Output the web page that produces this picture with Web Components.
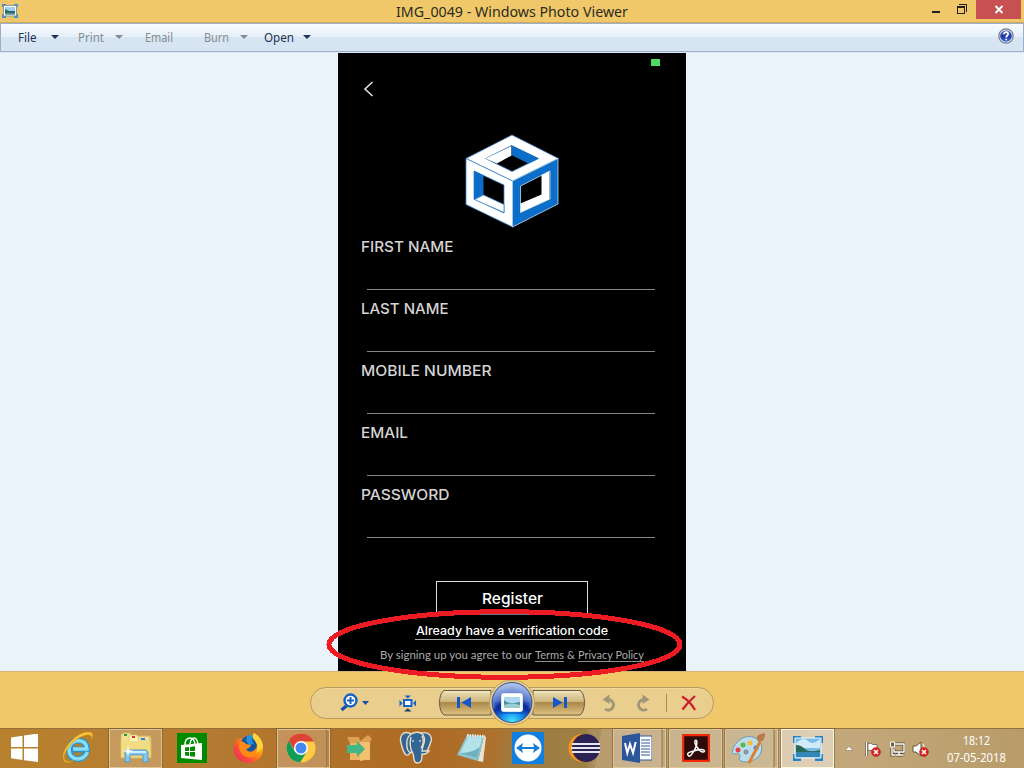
<!DOCTYPE html>
<html lang="en">
<head>
<meta charset="utf-8">
<title>Windows Photo Viewer</title>
<style>
html,body{margin:0;width:1024px;height:768px;overflow:hidden;background:#eaf2fb}
</style>
</head>
<body>
<photo-desktop></photo-desktop>
<script>
function define(name, html, extra) {
  const template = document.createElement('template');
  template.innerHTML = html;
  customElements.define(name, class extends HTMLElement {
    constructor() {
      super();
      this.attachShadow({mode: 'open'}).append(template.content.cloneNode(true));
    }
    connectedCallback() { if (extra) extra(this, this.shadowRoot); }
  });
}

// Widens or condenses its text so that it fills the width given in the "w" attribute.
define('fit-text', `<style>
:host{display:block;white-space:nowrap;flex:none}
span{display:inline-block;transform-origin:0 50%}
</style><span><slot></slot></span>`, (host, root) => {
  const w = +host.getAttribute('w');
  const span = root.querySelector('span');
  host.style.width = w + 'px';
  span.style.transform = 'scaleX(' + w / span.getBoundingClientRect().width + ')';
});

define('title-bar', `<style>
:host{display:flex;height:22px;background:#f0c869;border-bottom:1px solid #cfaa62;position:relative;font:15px/22px "Noto Sans",sans-serif;color:#2e2b23}
.app{margin:3px 0 0 2px;width:16px;height:15px;flex:none}
fit-text{margin-left:378px}
.btns{display:flex;margin-left:auto;margin-right:3px}
.btns svg{display:block}
</style>
<svg class="app" viewBox="0 0 16 15"><path d="M0 1h4v3H0zM12 1h4v3h-4zM0 11h4v4H0zM12 11h4v4h-4z" fill="#3a93d0"/><rect x="1.5" y="2.5" width="13" height="10.5" fill="#fff" stroke="#89979d"/><path d="M3 4h10v4H3z" fill="#9bd0ee"/><path d="M3 6l4 2 6 0v3.500H3z" fill="#286a65"/><path d="M3 10h10v1.500H3z" fill="#5b9b8c"/></svg>
<fit-text w="232">IMG_0049 - Windows Photo Viewer</fit-text>
<div class="btns">
<svg width="92" height="20" viewBox="929 0 92 20" shape-rendering="crispEdges"><path d="M932 11h8v2h-8z" fill="#222"/><path d="M957 6h8v8h-8zM958 8v5h6V8z" fill="#222" fill-rule="evenodd"/><path d="M959 4h8v1h-8zM966 4h1v8h-1z" fill="#222"/><path d="M976 0h45v19h-45z" fill="#c75050"/><path d="M995.500 6l7 7M1002.500 6l-7 7" stroke="#fff" stroke-width="1.900" shape-rendering="auto"/></svg>
</div>`);

define('menu-entry', `<style>
:host{display:flex;align-items:center;color:#1d3355;margin-left:var(--gap,0)}
:host([off]){color:#858a91}
svg{display:none;width:8px;height:4px;margin:-1px 0 0 var(--arrow);fill:currentColor}
:host([drop]) svg{display:block}
</style><slot></slot><svg viewBox="0 0 8 4"><path d="M0 0h8L4 4z"/></svg>`);

define('menu-bar', `<style>
:host{display:flex;align-items:center;box-sizing:border-box;height:29px;border:1px solid #9cafc8;background:linear-gradient(#f7fbff 0,#e5eff9 13px,#d7e5f2 13px,#d7e5f2);font:12.2px/26px "Noto Sans",sans-serif;padding-left:17px}
svg{margin-left:auto;margin-right:9px;margin-top:-3px}
fit-text{transform:translateY(-.5px)}
</style>
<menu-entry drop style="--arrow:14.500px"><fit-text w="18.500">File</fit-text></menu-entry>
<menu-entry drop off style="--gap:19px;--arrow:10.500px"><fit-text w="26">Print</fit-text></menu-entry>
<menu-entry off style="--gap:22.500px"><fit-text w="28">Email</fit-text></menu-entry>
<menu-entry drop off style="--gap:31px;--arrow:11px"><fit-text w="25">Burn</fit-text></menu-entry>
<menu-entry drop style="--gap:16px;--arrow:9px"><fit-text w="30">Open</fit-text></menu-entry>
<svg width="16" height="16" viewBox="0 0 16 16"><defs><linearGradient id="g" x2="0" y2="1"><stop stop-color="#6381d6"/><stop offset=".5" stop-color="#1a37a4"/><stop offset="1" stop-color="#3c67d8"/></linearGradient></defs><circle cx="8" cy="8" r="7.200" fill="#dfe3ea" stroke="#777f8b" stroke-width="1.200"/><circle cx="8" cy="8" r="5.800" fill="url(#g)"/><path d="M5.900 6.300c0-3 4.400-2.600 4.200-.1C10 7.500 8.200 7.600 8.200 9.400M8.200 10.700v1.600" fill="none" stroke="#fff" stroke-width="1.700"/></svg>`);

define('form-field', `<style>
:host{display:block;height:62.200px;font:500 14.600px/20px Inter,sans-serif;color:#d4d4d4}
i{display:block;height:1px;background:#858585;margin:32px 0 0 6.400px;width:288px}
</style><slot></slot><i></i>`);

define('cube-logo', `<style>:host{display:block;height:94px}svg{display:block}</style>
<svg width="94" height="94" viewBox="465 134 94 94"><g stroke="#3c86cf" stroke-width=".8" stroke-linejoin="round">
<path fill="#fff" fill-rule="evenodd" d="M512 135l46.500 23.500L512.500 181 466 158.500zM511.500 145.500L485.500 158.500 512 171.500 538.500 158.500z"/>
<path fill="#fff" fill-rule="evenodd" d="M466 158.500L512.500 181v46L466 204.500zM474 171v28l30 14v-28z"/>
<path fill="#0b6fc9" stroke="#c4dcf2" fill-rule="evenodd" d="M512.500 181l45.500-22.500v45.500L512.500 227zM520.500 186v26.500l29.500-13.500v-28z"/>
<path fill="#fff" stroke="none" d="M485.500 158.500l26-12.500v9.500L497 163.500z"/>
<path fill="#0b6fc9" stroke="none" d="M511.500 145.500l27 13-10 5-17-8.500z"/>
<path fill="#0b6fc9" stroke="none" d="M474 171l9.500 4.500v20.500l-9.500 4z"/>
<path fill="#fff" d="M474.500 199.500l9-4.500 20.500 9.500v8z"/>
<path fill="#fff" stroke="none" d="M541.500 175l8-4v28l-8-3zM520.500 203.500l21-9 8.500 4.500-29.500 13.500z"/></g></svg>`);

define('phone-photo', `<style>
:host{display:block;box-sizing:border-box;width:348px;height:618px;background:#000;overflow:hidden;color:#fff;font-family:Inter,sans-serif}
.status{display:flex;justify-content:flex-end;padding:6px 26px 0 0;height:7px}
.status b{width:9px;height:7px;background:#4cd964}
.back{display:block;margin:15px 0 0 25px}
cube-logo{margin:36px 0 0 127px}
.fields{margin:8.600px 0 0 23px}
.btn{box-sizing:border-box;width:152px;height:34px;margin:33.400px auto 0 98px;border:1px solid #ddd;border-bottom-color:#777;display:flex;justify-content:center;font:500 15px/34px Inter,sans-serif}
.code{width:195px;margin:6px 0 0 77px;border-bottom:1px solid #aaa;font:500 11.700px/20px Inter,sans-serif;height:19px;padding-left:1px;box-sizing:border-box}
.terms{display:flex;margin:6px 0 0 42px;font:11.500px/18px Lato,sans-serif;color:#aaa}
.terms u{text-decoration:none;border-bottom:1px solid #8d8d8d;height:15px}
</style>
<div class="status"><b></b></div>
<svg class="back" width="12" height="17" viewBox="363 81 12 17"><path d="M372.500 82.500l-7.500 7 7.500 7" transform="translate(0 -.5)" fill="none" stroke="#e0e0e0" stroke-width="1.600"/></svg>
<cube-logo></cube-logo>
<div class="fields">
<form-field><fit-text w="92.500">FIRST NAME</fit-text></form-field>
<form-field><fit-text w="87.500">LAST NAME</fit-text></form-field>
<form-field><fit-text w="130.500">MOBILE NUMBER</fit-text></form-field>
<form-field><fit-text w="47">EMAIL</fit-text></form-field>
<form-field><fit-text w="88.500">PASSWORD</fit-text></form-field>
</div>
<div class="btn"><fit-text w="61">Register</fit-text></div>
<div class="code"><fit-text w="192">Already have a verification code</fit-text></div>
<div class="terms"><fit-text w="152">By signing up you agree to our</fit-text><u style="margin-left:3px"><fit-text w="29">Terms</fit-text></u><fit-text w="8" style="margin:0 3px">&amp;</fit-text><u><fit-text w="66">Privacy Policy</fit-text></u></div>`);

define('viewer-controls', `<style>
:host{display:flex;box-sizing:border-box;height:57px;border-top:1px solid #d4b473;background:#f0c869;justify-content:center;padding-top:15px}
.pill{box-sizing:border-box;width:404px;height:32px;border:1px solid #b69a62;border-radius:16px;background:#e9ce8e;display:flex;align-items:center;box-shadow:inset 0 1px #f1d89d}
svg{display:block;flex:none;overflow:visible}
hr{width:1px;height:18px;border:0;background:#a68d5c;margin:0 0 0 16px}
</style>
<div class="pill">
<svg style="margin-left:29px" width="30" height="18" viewBox="340 694 30 18"><path d="M341.500 710l6-5" stroke="#1a4fae" stroke-width="3.200"/><circle cx="350.500" cy="700.500" r="6" fill="#fff" stroke="#1462c8" stroke-width="2.400"/><path d="M347 700.500h7M350.500 697v7" stroke="#1462c8" stroke-width="2"/><path d="M362 701h7l-3.500 4z" fill="#1550ae"/></svg>
<svg style="margin-left:29px" width="18" height="17" viewBox="399 694 18 17"><rect x="404" y="699" width="7.500" height="6" fill="#fff" stroke="#1864c8" stroke-width="2"/><path d="M404.500 694.500h6.500l-3.200 3zM399.500 699l3 3.200-3 3.200zM416 699l-3 3.200 3 3.200z" fill="#1864c8"/><path d="M404 710.500h7.500l-3.700-3.300z" fill="#263d72"/></svg>
<svg style="margin-left:22px" width="146" height="46" viewBox="439 680 146 46"><defs><linearGradient id="b" x2="0" y2="1"><stop stop-color="#eee0b5"/><stop offset=".45" stop-color="#ceb77f"/><stop offset=".47" stop-color="#a88648"/><stop offset="1" stop-color="#dfc381"/></linearGradient><radialGradient id="c" cx=".5" cy="1" r="1"><stop stop-color="#55ecff"/><stop offset=".25" stop-color="#1799ef"/><stop offset=".52" stop-color="#0c2ba3"/><stop offset=".6" stop-color="#4267c0"/><stop offset="1" stop-color="#bccdf2"/></radialGradient></defs>
<path d="M491 690.500h-47c-6 3-6 21 0 24.500h47zM533 690.500h47c6 3 6 21 0 24.500h-47z" fill="url(#b)" stroke="#665b41"/><path d="M490 692h-45M534 692h45" stroke="#f8edce"/>
<circle cx="512" cy="702.500" r="22.500" fill="#e9ce8e" stroke="#bda168"/><circle cx="512" cy="702.500" r="20" fill="url(#c)" stroke="#344d92"/><path d="M494 703c5-3 31-3 36 0-1 5-4 9-7 11h-22c-4-3-6-7-7-11" fill="#041d91" opacity=".3"/>
<rect x="501.500" y="693.500" width="21" height="18" rx="2" fill="#fff" stroke="#dde5ed"/><path d="M504 697h16v11h-16z" fill="#abd8f0"/><path d="M504 700q5 5 16 2v6h-16z" fill="#49939b"/><path d="M504 705q8-3 16 0v3h-16z" fill="#9acbcf"/>
<path d="M457 697h3v11h-3zM471 697v11l-9.500-5.500zM553 697v11l9.500-5.500zM564 697h3v11h-3z" fill="#1556ca"/></svg>
<svg style="margin-left:17px" width="16" height="17" viewBox="601 694 16 17"><path d="M607 698.500A5.300 5.300 0 1 1 604 708" fill="none" stroke="#9f9578" stroke-width="2.800"/><path d="M608.500 693.500v9.500l-7-4.500z" fill="#9f9578"/></svg>
<svg style="margin-left:16px" width="16" height="17" viewBox="634 694 16 17"><path d="M644 698.500A5.300 5.300 0 1 0 647 708" fill="none" stroke="#9f9578" stroke-width="2.800"/><path d="M642.500 693.500v9.500l7-4.500z" fill="#9f9578"/></svg>
<hr>
<svg style="margin-left:14px" width="16" height="16" viewBox="681 694 16 16"><path d="M682 695.500Q690 700 695 709M695 695q-7 6-12.500 13.500" fill="none" stroke="#c8202e" stroke-width="2.300"/></svg>
</div>`);

define('task-item', `<style>
:host{display:flex;box-sizing:border-box;width:56px;height:40px;flex:none;align-items:center;justify-content:center;padding-bottom:2px;position:relative}
.frame{display:none;position:absolute;left:.5px;top:0;width:53px;height:39px;box-sizing:border-box;border:1px solid #dfc596;background:#ffffff38;outline:1px solid #72572b88;outline-offset:0}
:host([open]) .frame{display:block}
:host([many]) .frame{width:49px}
.edge{display:none;position:absolute;left:50px;top:0;width:4px;height:39px;box-sizing:border-box;border:1px solid #dfc596;border-left:0;background:#ffffff20;outline:1px solid #72572b66}
:host([many]) .edge{display:block}
:host([active]) .frame{background:#ffffff70;border-color:#fff6df}
::slotted(svg){position:relative;display:block}
:host([many]) ::slotted(svg){left:-3px}
</style><div class="frame"></div><div class="edge"></div><slot></slot>`);

define('task-bar', `<style>
:host{display:flex;box-sizing:border-box;height:40px;border-top:1px solid #94703a;background:linear-gradient(100deg,transparent 490px,#94804a99 510px,#94804a66 592px,transparent 593px),linear-gradient(90deg,#b8812e 0,#b47a31 220px,#ad6a23 420px,#ad722f 495px,#a58040 585px,#b79b6c 593px,#c2a87b 850px,#b89b69 1024px);font:12px/17px "Noto Sans",sans-serif;color:#fff}
.tray{display:flex;align-items:center;margin-left:9px}
.clock{margin:1px 0 0 18px;display:flex;flex-direction:column;align-items:center}
</style>
<task-item style="width:50px;padding-right:2px"><svg width="28" height="28" viewBox="11 734 28 28" fill="#fff"><path d="M12 737.500l11.500-1.800V747H12zM25 735.500l14-2V747H25zM12 748.500h11.500V760L12 758.200zM25 748.500h14V762l-14-1.800z"/></svg></task-item>
<task-item style="width:58px;padding-right:3px"><svg width="32" height="32" viewBox="0 0 32 32"><path d="M24.500 20.500q-3 7-9 6.500-8-.5-8-9t8-9.500q9 0 9.500 9H10" fill="none" stroke="#2695cb" stroke-width="6"/><path d="M25.500 20q-3 7-10 7-8.500-1-8.500-9t8.500-9.500q9 0 9.500 8.500H11" fill="none" stroke="#8bdcf4" stroke-width="3.500"/><path d="M3 28C-1 22 12 5 25 3q6-1 4 6 5-10-4-9C13 1-3 19 2 29q3 4 11-1-8 3-10 0" fill="#f8c536" stroke="#c88b12" stroke-width=".5"/></svg></task-item>
<task-item open><svg width="32" height="32" viewBox="0 0 32 32"><path d="M1 3l2-2h7l2 3h18l1 3v19H1z" fill="#f2df8f" stroke="#d7b95d"/><path d="M9 5l1-2h7l2 4h11v3H9zM18 8l2-3h9l1 4z" fill="#fff2ba" stroke="#d3b564" stroke-width=".6"/><path d="M4 2h3v2H4z" fill="#1c9850"/><path d="M12 4h3v2h-3z" fill="#e03227"/><path d="M21 6h4v2h-4z" fill="#238bd3"/><path d="M1 9h29v16H1z" fill="#f1dc82"/><path d="M5 30V19l2-1h19l2 2v10h-5v-7H10v7z" fill="#81c7ed" stroke="#5a9abc"/><path d="M6 19h20v2H6z" fill="#cbefff"/><path d="M8 13l1 5 5 1-5 1-1 5-1-5-5-1 5-1z" fill="#fff"/></svg></task-item>
<task-item><svg width="30" height="30" viewBox="0 0 30 30"><path d="M0 0h30v30H0z" fill="#008a00"/><path d="M4 12l21-2v17L4 25z" fill="#fff"/><path d="M8 12q0-7 5-7 4 0 5 6M13 11q1-6 4-6 3 0 4 6" fill="none" stroke="#fff" stroke-width="1.400"/><path d="M8 14.500l4-.5V18H8zM13 13.900l5-.6V18h-5zM8 19h4v4l-4-.4zM13 19h5v4.700l-5-.5z" fill="#008a00"/></svg></task-item>
<task-item><svg width="31" height="31" viewBox="0 0 31 31"><defs><linearGradient id="f" x1="1" x2="0" y2="1"><stop stop-color="#fff04c"/><stop offset=".4" stop-color="#ff980d"/><stop offset=".7" stop-color="#fb483a"/><stop offset="1" stop-color="#df267e"/></linearGradient></defs><path d="M2 2q0 3 2 5l4-2 3 3 9-6 1-2q8 5 9 13c1 10-6 17-14 17S-1 24 1 14Q1 10 3 8z" fill="url(#f)"/><circle cx="16" cy="11.500" r="8.500" fill="#15549f"/><path d="M14 3q4-2 7 0-4 4 0 8l-5 1-3-4z" fill="#2593df"/><path d="M7 8q5 1 6 3l5 1q-1 3-5 4 2 4 7 2 5-3 4-8 3 4 1 9-4 7-12 5-6-3-7-10z" fill="#ff8b16"/><path d="M21 0q-3 4 1 8 4 5 1 12 5-2 7-7Q29 5 21 0" fill="#ffd43a"/></svg></task-item>
<task-item open many><svg width="30" height="30" viewBox="0 0 30 30"><circle cx="15" cy="15" r="14.500" fill="#fc4"/><path d="M2.500 7.700A14.500 14.500 0 0 1 28 8.500H15L8 16z" fill="#dc4437"/><path d="M2.500 7.700A14.500 14.500 0 0 0 14 29.500l7-11-12 0z" fill="#109d58"/><circle cx="15" cy="15" r="7" fill="#fff"/><circle cx="15" cy="15" r="5.500" fill="#4688f1"/></svg></task-item>
<task-item><svg width="28" height="28" viewBox="0 0 28 28"><path d="M4 9h20v17L4 26z" fill="#edb461"/><path d="M4 9L1 3l12 0 1 4 8-6 4 4-3 4z" fill="#dca151"/><path d="M14 8l10 0v17l-10 2z" fill="#f3c070"/><path d="M1 11h10V7l8 8-8 8v-4H1z" fill="#42b784"/></svg></task-item>
<task-item><svg width="34" height="34" viewBox="0 0 34 34"><g fill="#336791" stroke="#eadbc9" stroke-width="1.400"><path d="M10 2C4 0 0 5 2 12q2 9 5 12 3 1 6-5l4-14zM20 3c9-4 15 2 11 10-2 7-4 10-8 10l-7-15z"/><path d="M11 4c4-4 12-4 14 2 2 5-2 9-2 14l7 0q-3 4-7 3c0 7-1 9-5 9-5 0-2-9-5-11-6 3-7-13-2-17z"/><path d="M12 6q-2 8 1 15M23 5q3 6-1 12" fill="none"/></g><path d="M13 10h2M20 10h2" stroke="#fff"/></svg></task-item>
<task-item><svg width="32" height="30" viewBox="0 0 32 30"><path d="M28 3l2 1-3 25-5-1z" fill="#e7e4d2"/><path d="M11 2l17 1-6 25L1 22z" fill="#8cc3cd"/><path d="M12 4l14 1-5 20L4 20z" fill="#b3e2e9"/><path d="M4 20l17 5 3-11q-8 6-20 6" fill="#6fafbd"/><path d="M11 2.500l18 1" stroke="#eee" stroke-width="3" stroke-dasharray="1.500 1"/></svg></task-item>
<task-item><svg width="32" height="32" viewBox="0 0 32 32"><path d="M0 0h32v32H0z" fill="#0f80df"/><circle cx="16" cy="16" r="13.500" fill="#fff"/><path d="M4 16l7-5-1 4h12l-1-4 7 5-7 5 1-4H10l1 4z" fill="#127ed6"/></svg></task-item>
<task-item><svg width="32" height="30" viewBox="0 0 32 30"><circle cx="14.500" cy="15" r="14" fill="#f7941e"/><circle cx="18" cy="15" r="14" fill="#2c2255"/><path d="M4 11h28M3 15h29M4 19h28" stroke="#e5e5ed" stroke-width="2"/></svg></task-item>
<task-item open many><svg width="30" height="30" viewBox="0 0 30 30"><path d="M16 3h14v24H16z" fill="#fff" stroke="#315b9c"/><path d="M19 7h9M19 10h9M19 13h9M19 16h9M19 19h9M19 22h9" stroke="#315b9c"/><path d="M0 3l18-3v30L0 27z" fill="#2b579a"/><path d="M3 10l2.300 10L8 11l3 9 2.700-11" fill="none" stroke="#fff" stroke-width="2"/></svg></task-item>
<task-item open><svg width="28" height="28" viewBox="0 0 28 28"><path d="M1 1h26v26H1z" fill="#2c0c0b" stroke="#f42a0a" stroke-width="2.500"/><path d="M7 22c-5-3 4-5 8-6 8-2 9 2 6 2-4 0-9-9-8-11 2-3 3 3 0 8-2 4-5 8-6 7" fill="none" stroke="#fff" stroke-width="1.500"/></svg></task-item>
<task-item open many><svg width="34" height="31" viewBox="0 0 34 31"><path d="M9 6C20-1 33 8 29 19c-2 8-14 12-20 9-4-2 1-5-2-7-2-1-6 1-7-1Q2 10 9 6" fill="#bddcec" stroke="#6c9ab1"/><circle cx="6" cy="17" r="2.500" fill="#e34443"/><circle cx="11" cy="12" r="2.500" fill="#58b94b"/><circle cx="18" cy="10" r="2.500" fill="#f5bd34"/><circle cx="24" cy="15" r="2.500" fill="#3784d1"/><circle cx="14" cy="19" r="2" fill="#b29b82" stroke="#578eaa"/><path d="M28 9L17 30" stroke="#df812f" stroke-width="3"/><path d="M25 7q-1-5 4-6l4-1q0 9-6 9" fill="#b87c49"/></svg></task-item>
<task-item open active><svg width="32" height="28" viewBox="0 0 32 28"><path d="M1 2h8v7H1zM23 2h8v7h-8zM1 20h8v7H1zM23 20h8v7h-8z" fill="#2583c6"/><path d="M3 4h26v20H3z" fill="#79bce8" stroke="#f3f8fa"/><path d="M4 9q8-7 12-2t12-2v9H4z" fill="#d0eaf7"/><path d="M4 11q5 0 9 4t15 1v4H4z" fill="#256a55"/><path d="M4 18h24v5H4z" fill="#3586b5"/></svg></task-item>
<div class="tray">
<svg width="8" height="5" viewBox="0 0 8 5"><path d="M0 4.500L4 .5l4 4z" fill="#fff" stroke="#776445" stroke-width=".5"/></svg>
<svg style="margin-left:12px" width="16" height="16" viewBox="0 0 16 16"><path d="M1.500 1v14" stroke="#5c4e39" stroke-width="3"/><path d="M3 2.500q3-1 5 1h4v7q-3 1-5-1H3z" fill="#fff" stroke="#675941" stroke-width=".8"/><path d="M1.500 1v14" stroke="#fff" stroke-width="1.500"/><circle cx="11" cy="11" r="4.500" fill="#da2525" stroke="#922" stroke-width=".5"/><path d="M9 9l4 4M13 9l-4 4" stroke="#fff" stroke-width="1.500"/></svg>
<svg style="margin-left:8px" width="16" height="16" viewBox="0 0 16 16"><path d="M6 3h9v8H5V8M10 11v3M7 14h7M3 6v8h3" fill="none" stroke="#57492f" stroke-width="3"/><path d="M6 3h9v8H5V8M10 11v3M7 14h7M3 6v8h3" fill="none" stroke="#fff" stroke-width="1.400"/><path d="M1.500 1h4v5h-4z" fill="#746548" stroke="#fff"/></svg>
<svg style="margin-left:7px" width="17" height="16" viewBox="0 0 17 16"><path d="M1 5h3l5-4v14l-5-4H1z" fill="#fff" stroke="#665437"/><path d="M11 3q3 4 1 9" fill="none" stroke="#fff"/><circle cx="12" cy="11" r="4.500" fill="#da2525" stroke="#922" stroke-width=".5"/><path d="M10 9l4 4M14 9l-4 4" stroke="#fff" stroke-width="1.500"/></svg>
<div class="clock"><fit-text w="27">18:12</fit-text><fit-text w="59">07-05-2018</fit-text></div>
</div>`);

define('photo-desktop', `<style>
:host{display:block;width:1024px;height:768px;position:relative;overflow:hidden}
.view{display:flex;justify-content:center;height:618px;background:#eaf2fb;border-top:1px solid #dfeaf5}
.mark{position:absolute;left:326px;top:608px}
</style>
<title-bar></title-bar>
<menu-bar></menu-bar>
<div class="view"><phone-photo></phone-photo></div>
<viewer-controls></viewer-controls>
<task-bar></task-bar>
<svg class="mark" width="358" height="73" viewBox="326 608 358 73"><ellipse cx="504.500" cy="644.500" rx="175.500" ry="32.800" fill="none" stroke="#ed1c24" stroke-width="5" shape-rendering="crispEdges"/></svg>`);
</script>
</body>
</html>
